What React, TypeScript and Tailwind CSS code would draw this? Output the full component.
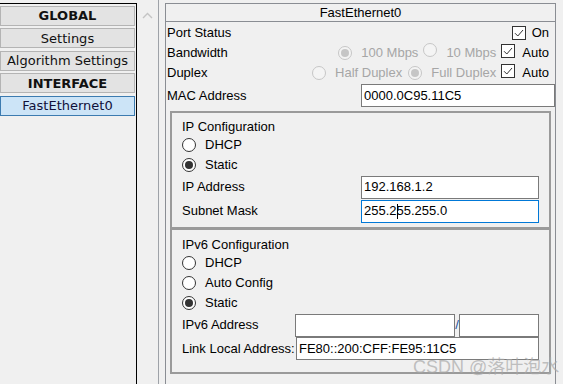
import React from 'react';
import clsx from 'clsx';

const Radio: React.FC<{ checked?: boolean; disabled?: boolean }> = ({ checked, disabled }) => (
  <span
    className={clsx(
      'inline-flex items-center justify-center w-[14px] h-[14px] rounded-full border shrink-0',
      disabled ? 'border-[#c6c6c6] bg-[#f4f4f4]' : 'border-[#333333] bg-white'
    )}
  >
    {checked && <span className={clsx('w-[8px] h-[8px] rounded-full', disabled ? 'bg-[#c6c6c6]' : 'bg-[#333333]')} />}
  </span>
);

const Check: React.FC = () => (
  <span className="inline-flex items-center justify-center w-[14px] h-[14px] border border-[#333333] bg-white shrink-0">
    <svg width="12" height="12" viewBox="0 0 12 12">
      <path d="M2 6.2 L4.8 9 L10 3" fill="none" stroke="#333" strokeWidth="1" />
    </svg>
  </span>
);

const Field: React.FC<{ className?: string; children?: React.ReactNode }> = ({ className, children }) => (
  <div className={clsx('h-[23px] bg-white border flex items-center pl-[2px] text-[13px] text-black', className)}>{children}</div>
);

const navItem = 'h-[20px] border flex items-center justify-center text-[13px] leading-none';

export default function App() {
  return (
    <div className="relative w-[563px] h-[384px] overflow-hidden bg-[#f0f0f0] flex">
      {/* left list */}
      <div className="w-[137px] h-full pt-[3px] font-['DejaVu_Sans',sans-serif]">
        <div className="h-full border-t border-r border-black flex flex-col gap-[2.5px] pt-[1.5px] pr-px">
          <div className={clsx(navItem, 'border-[#b4b4b4] bg-[#e3e3e3] font-bold text-[#111]')}>GLOBAL</div>
          <div className={clsx(navItem, 'border-[#b4b4b4] bg-[#e3e3e3] text-[#111]')}>Settings</div>
          <div className={clsx(navItem, 'border-[#b4b4b4] bg-[#e3e3e3] text-[#111]')}>Algorithm Settings</div>
          <div className={clsx(navItem, 'border-[#b4b4b4] bg-[#e3e3e3] font-bold text-[#111]')}>INTERFACE</div>
          <div className={clsx(navItem, 'border-[#3c7bb0] bg-[#cce4f7] text-[#10103a]')}>FastEthernet0</div>
        </div>
      </div>

      {/* scrollbar */}
      <div className="w-[22px] h-full border-r border-[#9ea2a8] flex justify-center pt-[12px]">
        <svg width="11" height="7" viewBox="0 0 11 7">
          <path d="M1 6 L5.5 1.5 L10 6" fill="none" stroke="#c4c4c4" strokeWidth="1.4" />
        </svg>
      </div>

      {/* main panel */}
      <div className="ml-[6px] mt-[3px] w-[391px] h-full border border-b-0 border-[#8a8d93] font-['Liberation_Sans',Arial,sans-serif] text-[13px] text-black">
        <div className="h-[18px] border-b border-[#8a8d93] flex items-center justify-center leading-none">FastEthernet0</div>

        <div className="pl-px pr-[6px] pt-px">
          <div className="h-[20px] flex items-center">
            <span className="flex-1">Port Status</span>
            <Check />
            <span className="ml-[6px]">On</span>
          </div>
          <div className="h-[20px] flex items-center">
            <span className="flex-1">Bandwidth</span>
            <Radio checked disabled />
            <span className="ml-[9px] text-[#a6a6a6]">100 Mbps</span>
            <span className="ml-[5px]"><Radio disabled /></span>
            <span className="ml-[9px] text-[#a6a6a6]">10 Mbps</span>
            <span className="ml-[5px]"><Check /></span>
            <span className="ml-[7px]">Auto</span>
          </div>
          <div className="h-[20px] flex items-center">
            <span className="flex-1">Duplex</span>
            <Radio disabled />
            <span className="ml-[9px] text-[#a6a6a6]">Half Duplex</span>
            <span className="ml-[6px]"><Radio checked disabled /></span>
            <span className="ml-[9px] text-[#a6a6a6]">Full Duplex</span>
            <span className="ml-[5px]"><Check /></span>
            <span className="ml-[7px]">Auto</span>
          </div>
        </div>

        <div className="pl-px pr-0 mt-px flex items-center h-[23px]">
          <span className="flex-1">MAC Address</span>
          <Field className="w-[194px] border-[#7a7a7a]">0000.0C95.11C5</Field>
        </div>

        {/* IP configuration */}
        <div className="mx-[4px] mt-[4px] border-2 border-[#9a9a9a] pl-[10px] pt-[5px] pb-[4px]">
          <div className="h-[17px] flex items-center">IP Configuration</div>
          <div className="h-[20px] flex items-center">
            <Radio />
            <span className="ml-[9px]">DHCP</span>
          </div>
          <div className="h-[20px] flex items-center">
            <Radio checked />
            <span className="ml-[9px]">Static</span>
          </div>
          <div className="flex items-center h-[24px] pr-[10px]">
            <span className="flex-1">IP Address</span>
            <Field className="w-[178px] border-[#7a7a7a]">192.168.1.2</Field>
          </div>
          <div className="flex items-center h-[24px] pr-[10px]">
            <span className="flex-1">Subnet Mask</span>
            <Field className="w-[178px] border-[#0078d7]">
              255.2<span className="inline-block w-px h-[15px] bg-black -mr-px" />55.255.0
            </Field>
          </div>
        </div>

        {/* IPv6 configuration */}
        <div className="mx-[4px] -mt-px border-2 border-[#9a9a9a] pl-[10px] pt-[6px] pb-[12px]">
          <div className="h-[17px] flex items-center">IPv6 Configuration</div>
          <div className="h-[20px] flex items-center">
            <Radio />
            <span className="ml-[9px]">DHCP</span>
          </div>
          <div className="h-[20px] flex items-center">
            <Radio />
            <span className="ml-[9px]">Auto Config</span>
          </div>
          <div className="h-[20px] flex items-center">
            <Radio checked />
            <span className="ml-[9px]">Static</span>
          </div>
          <div className="flex items-center h-[24px] pr-[10px]">
            <span className="flex-1">IPv6 Address</span>
            <Field className="w-[160px] border-[#7a7a7a]" />
            <span className="w-[4px] text-center text-[#1b4fa0]">/</span>
            <Field className="w-[80px] border-[#7a7a7a]" />
          </div>
          <div className="flex items-center h-[23px] pr-[10px]">
            <span className="flex-1 whitespace-nowrap">Link Local Address:</span>
            <Field className="w-[243px] border-[#7a7a7a]">FE80::200:CFF:FE95:11C5</Field>
          </div>
        </div>
      </div>

      {/* watermark */}
      <div className="absolute left-[413px] top-[357px] text-[18px] leading-[20px] text-[#a8a8a8]/70 font-['Liberation_Sans','Noto_Sans_CJK_SC',sans-serif]">
        CSDN @落叶泡水
      </div>
    </div>
  );
}
